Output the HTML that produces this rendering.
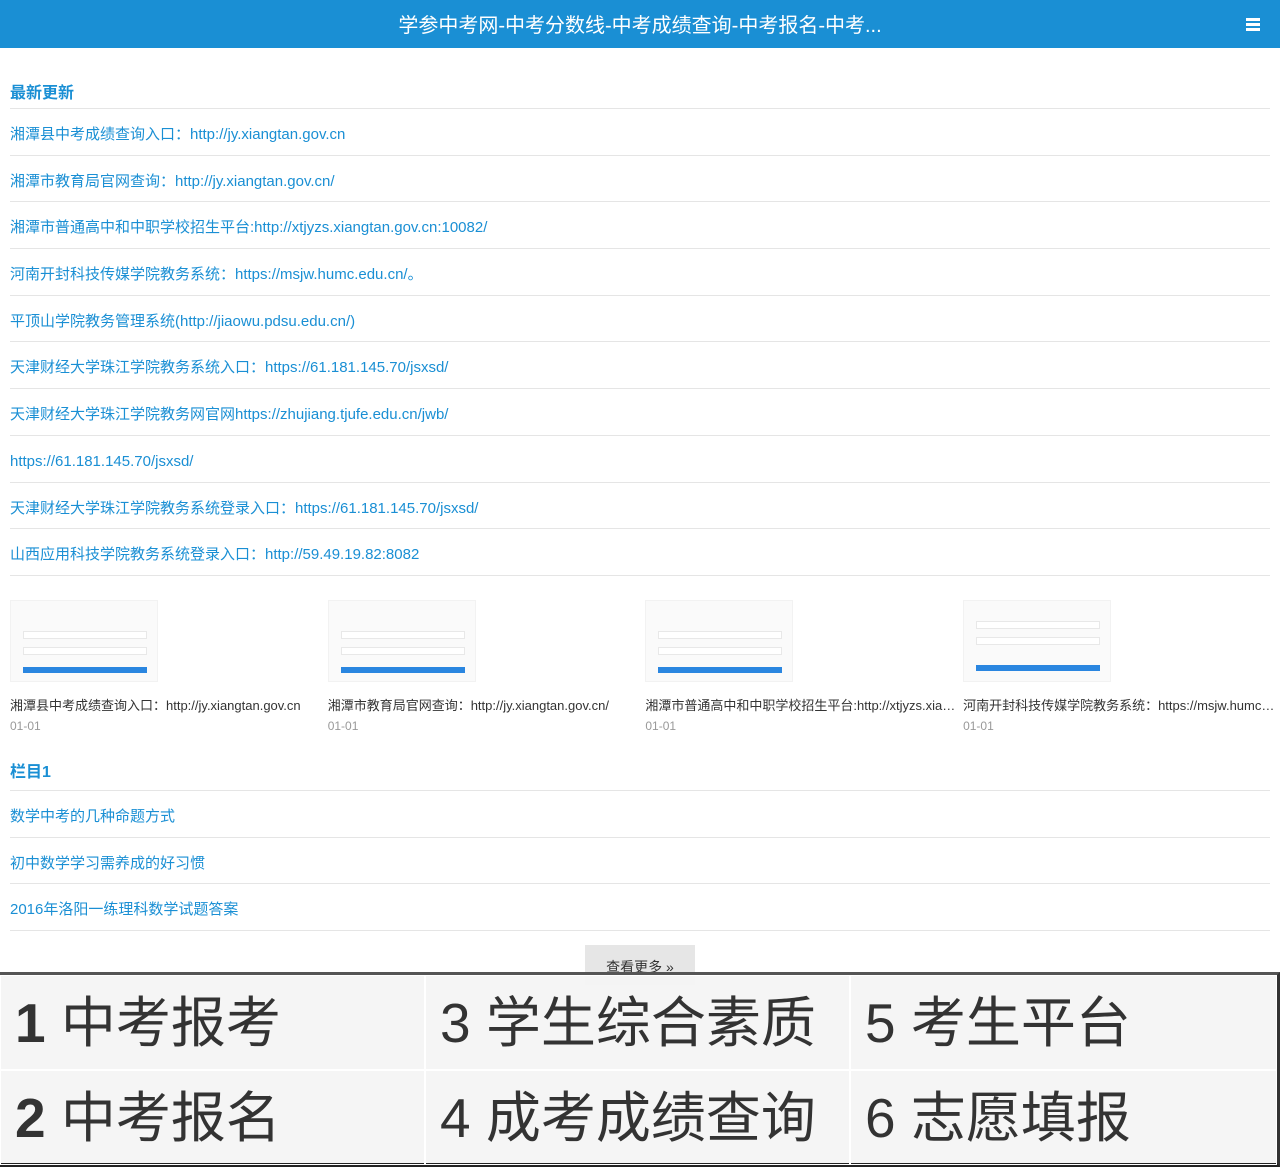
<!DOCTYPE html>
<html><head><meta charset="utf-8"><style>
*{margin:0;padding:0;box-sizing:border-box}
body{width:1280px;height:1167px;overflow:hidden;background:#fff;font-family:"Liberation Sans","Noto Sans CJK SC",sans-serif;position:relative}
.hd{height:48px;background:#1a8fd4;color:#fff;font-size:20px;text-align:center;line-height:52px;position:relative}
.menu{position:absolute;right:20px;top:18px;width:14px}
.menu i{display:block;height:3px;background:#fff;margin-bottom:2px}
.sec{padding:0 10px}
.t{color:#1a8fd4;font-weight:bold;font-size:16px;height:61px;line-height:28px;padding-top:32px;border-bottom:1px solid #e5e5e5}
.t2{height:42px;padding-top:10px}
.it{height:46.7px;line-height:52px;border-bottom:1px solid #e5e5e5;color:#1a8fd4;font-size:15px;white-space:nowrap}
.pics{display:flex;padding:24px 0 0 10px;height:173px;overflow:hidden;width:1280px}
.p{flex:none;width:317.7px;font-size:13px;color:#333;white-space:nowrap;overflow:hidden;padding-right:6px}
.img{width:148px;height:82px;background:#fafafa;border:1px solid #f2f2f2;position:relative;margin-bottom:13px}
.img b{position:absolute;left:12px;right:10px;bottom:8px;height:6px;background:#2a86e0}
.img s{position:absolute;left:12px;right:10px;height:8px;border:1px solid #e8e8e8;background:#fff}
.p span{display:block;text-overflow:ellipsis;overflow:hidden}
.d{color:#999;font-size:12px;margin-top:5px}
.more{position:absolute;left:585px;top:945px;width:110px;height:40px;background:#e6e6e6;text-align:center;line-height:44px;font-size:14px;color:#333}
.ov{position:absolute;left:0;top:972px;width:1280px;height:195px;border-top:3px solid #555;border-bottom:4px solid #222;border-right:3px solid #333;background:rgba(244,244,244,.95);display:grid;grid-template-columns:425px 425px 1fr;grid-template-rows:95px 95px}
.ov div{border:1px solid #fff;font-size:55px;color:#333;line-height:95px;padding-left:14px;white-space:nowrap}
.ov b{font-weight:bold}
</style></head><body>
<div class="hd">学参中考网-中考分数线-中考成绩查询-中考报名-中考...<div class="menu"><i></i><i></i><i></i></div></div>
<div class="sec">
<div class="t">最新更新</div>
<div class="it">湘潭县中考成绩查询入口：http://jy.xiangtan.gov.cn</div>
<div class="it">湘潭市教育局官网查询：http://jy.xiangtan.gov.cn/</div>
<div class="it">湘潭市普通高中和中职学校招生平台:http://xtjyzs.xiangtan.gov.cn:10082/</div>
<div class="it">河南开封科技传媒学院教务系统：https://msjw.humc.edu.cn/。</div>
<div class="it">平顶山学院教务管理系统(http://jiaowu.pdsu.edu.cn/)</div>
<div class="it">天津财经大学珠江学院教务系统入口：https://61.181.145.70/jsxsd/</div>
<div class="it">天津财经大学珠江学院教务网官网https://zhujiang.tjufe.edu.cn/jwb/</div>
<div class="it">https://61.181.145.70/jsxsd/</div>
<div class="it">天津财经大学珠江学院教务系统登录入口：https://61.181.145.70/jsxsd/</div>
<div class="it">山西应用科技学院教务系统登录入口：http://59.49.19.82:8082</div>
</div>
<div class="pics">
<div class="p"><div class="img"><s style="top:30px"></s><s style="top:46px"></s><b></b></div><span>湘潭县中考成绩查询入口：http://jy.xiangtan.gov.cn</span><div class="d">01-01</div></div>
<div class="p"><div class="img"><s style="top:30px"></s><s style="top:46px"></s><b></b></div><span>湘潭市教育局官网查询：http://jy.xiangtan.gov.cn/</span><div class="d">01-01</div></div>
<div class="p"><div class="img"><s style="top:30px"></s><s style="top:46px"></s><b></b></div><span>湘潭市普通高中和中职学校招生平台:http://xtjyzs.xiangtan.gov.cn</span><div class="d">01-01</div></div>
<div class="p"><div class="img"><s style="top:20px"></s><s style="top:36px"></s><b style="bottom:10px"></b></div><span>河南开封科技传媒学院教务系统：https://msjw.humc.edu.cn/</span><div class="d">01-01</div></div>
</div>
<div class="sec">
<div class="t t2">栏目1</div>
<div class="it">数学中考的几种命题方式</div>
<div class="it">初中数学学习需养成的好习惯</div>
<div class="it">2016年洛阳一练理科数学试题答案</div>
</div>
<div class="more">查看更多 »</div>
<div class="ov">
<div><b>1</b> 中考报考</div><div>3 学生综合素质</div><div>5 考生平台</div>
<div><b>2</b> 中考报名</div><div>4 成考成绩查询</div><div>6 志愿填报</div>
</div>
</body></html>
